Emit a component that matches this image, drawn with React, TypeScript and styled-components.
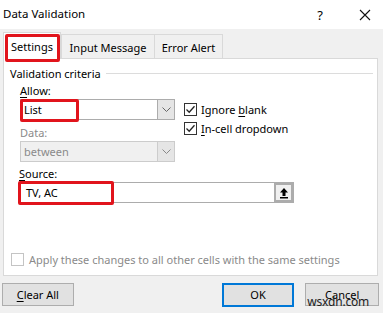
import React from "react";
import styled, { createGlobalStyle } from "styled-components";

const Global = createGlobalStyle`
  html, body { margin: 0; padding: 0; background: #f0f0f0; }
  body { font-family: "Noto Sans", "Open Sans", sans-serif; font-size: 11px; color: #000; }
`;

const Window = styled.div`
  width: 383px;
  height: 313px;
  background: #f0f0f0;
  display: flex;
  flex-direction: column;
  position: relative;
  overflow: hidden;
`;

const TitleBar = styled.div`
  height: 29px;
  background: #fff;
  display: flex;
  align-items: center;
  padding: 0 0 0 3px;
  font-size: 11.5px;
`;

const Title = styled.div`
  flex: 1;
  margin-top: -2px;
`;

const TitleBtn = styled.div<{ $w: number }>`
  width: ${(p) => p.$w}px;
  display: flex;
  justify-content: center;
  font-size: 13px;
`;

const TabStrip = styled.div`
  height: 29px;
  display: flex;
  align-items: flex-end;
  padding-left: 3px;
`;

const Tab = styled.div<{ $active?: boolean; $w: number }>`
  position: relative;
  width: ${(p) => p.$w}px;
  height: ${(p) => (p.$active ? 27 : 24)}px;
  box-sizing: border-box;
  display: flex;
  align-items: center;
  justify-content: center;
  background: ${(p) => (p.$active ? "#fff" : "#f0f0f0")};
  border: 1px solid #d9d9d9;
  border-bottom: none;
  margin-right: ${(p) => (p.$active ? 0 : -1)}px;
  padding-top: ${(p) => (p.$active ? 0 : 1)}px;
  z-index: ${(p) => (p.$active ? 2 : 1)};
  margin-bottom: ${(p) => (p.$active ? -1 : 0)}px;
`;

const Mark = styled.div<{ $l: number; $t: number; $w: number; $h: number }>`
  position: absolute;
  left: ${(p) => p.$l}px;
  top: ${(p) => p.$t}px;
  width: ${(p) => p.$w}px;
  height: ${(p) => p.$h}px;
  border: 3px solid #e1141c;
  border-radius: 2px;
  box-sizing: border-box;
  pointer-events: none;
`;

const Panel = styled.div`
  margin: 0 5px 0 3px;
  height: 218px;
  box-sizing: border-box;
  background: #fff;
  border: 1px solid #d9d9d9;
  padding: 7px 0 0 6px;
  display: flex;
  flex-direction: column;
`;

const GroupHead = styled.div`
  display: flex;
  align-items: center;
  gap: 5px;
  padding-right: 4px;
  &::after {
    content: "";
    flex: 1;
    height: 1px;
    background: #dcdcdc;
  }
`;

const Criteria = styled.div`
  display: grid;
  grid-template-columns: 155px auto;
  column-gap: 9px;
  margin-left: 10px;
  margin-top: 1px;
`;

const Left = styled.div`
  display: flex;
  flex-direction: column;
`;

const Label = styled.div<{ $disabled?: boolean; $mt?: number }>`
  height: 17px;
  line-height: 17px;
  margin-top: ${(p) => p.$mt ?? 0}px;
  color: ${(p) => (p.$disabled ? "#8a8a8a" : "#000")};
  u { text-decoration: underline; text-underline-offset: 2px; }
`;

const Combo = styled.div<{ $disabled?: boolean }>`
  position: relative;
  width: 155px;
  height: 21px;
  box-sizing: border-box;
  border: 1px solid ${(p) => (p.$disabled ? "#cccccc" : "#acacac")};
  background: ${(p) => (p.$disabled ? "#f0f0f0" : "#fff")};
  color: ${(p) => (p.$disabled ? "#8a8a8a" : "#000")};
  display: flex;
  align-items: center;
`;

const ComboText = styled.div`
  flex: 1;
  padding-left: 3px;
`;

const Arrow = styled.div<{ $disabled?: boolean }>`
  width: 17px;
  height: 100%;
  box-sizing: border-box;
  border-left: 1px solid ${(p) => (p.$disabled ? "#cccccc" : "#acacac")};
  background: #e5e5e5;
  display: flex;
  align-items: center;
  justify-content: center;
`;

const Checks = styled.div`
  display: flex;
  flex-direction: column;
  gap: 6px;
  margin-top: 21px;
`;

const CheckRow = styled.div<{ $disabled?: boolean }>`
  display: flex;
  align-items: center;
  gap: 4px;
  height: 13px;
  color: ${(p) => (p.$disabled ? "#8a8a8a" : "#000")};
  u { text-decoration: underline; text-underline-offset: 2px; }
`;

const Box = styled.div<{ $disabled?: boolean }>`
  width: 13px;
  height: 13px;
  box-sizing: border-box;
  border: 1px solid ${(p) => (p.$disabled ? "#c4c4c4" : "#333")};
  background: #fff;
  display: flex;
  align-items: center;
  justify-content: center;
`;

const SourceWrap = styled.div`
  margin-left: 9px;
  display: flex;
  flex-direction: column;
`;

const SourceInput = styled.div`
  position: relative;
  width: 275px;
  height: 21px;
  box-sizing: border-box;
  border: 1px solid #acacac;
  display: flex;
  align-items: center;
  padding-left: 6px;
`;

const SourceText = styled.div`
  flex: 1;
`;

const Collapse = styled.div`
  width: 19px;
  height: 19px;
  box-sizing: border-box;
  border: 2px solid #acacac;
  background: #f0f0f0;
  display: flex;
  align-items: center;
  justify-content: center;
`;

const ApplyRow = styled(CheckRow)`
  margin-top: auto;
  margin-bottom: 9px;
  margin-left: 1px;
  gap: 5px;
`;

const Footer = styled.div`
  flex: 1;
  display: flex;
  align-items: center;
  padding: 0 4px 0 2px;
`;

const Button = styled.div<{ $default?: boolean; $w: number; $ml?: number }>`
  width: ${(p) => p.$w}px;
  height: ${(p) => (p.$default ? 24 : 23)}px;
  margin-left: ${(p) => p.$ml ?? 0}px;
  box-sizing: border-box;
  border: ${(p) => (p.$default ? "2px solid #0078d7" : "1px solid #adadad")};
  background: #e1e1e1;
  display: flex;
  align-items: center;
  justify-content: center;
  position: relative;
  u { text-decoration: underline; text-underline-offset: 2px; }
`;

const Watermark = styled.div`
  position: absolute;
  left: 1px;
  top: 9px;
  font-size: 12px;
  color: #222;
  letter-spacing: -0.2px;
`;

const Chevron = ({ color = "#666" }: { color?: string }) => (
  <svg width="9" height="6" viewBox="0 0 9 6">
    <path d="M0.5 0.5 L4.5 4.5 L8.5 0.5" fill="none" stroke={color} strokeWidth="1" />
  </svg>
);

const Tick = () => (
  <svg width="11" height="11" viewBox="0 0 11 11">
    <path d="M1.5 5.5 L4.2 8.2 L9.5 2.2" fill="none" stroke="#222" strokeWidth="1.3" />
  </svg>
);

const UpIcon = () => (
  <svg width="10" height="12" viewBox="0 0 10 12">
    <path d="M5 1 L1 5.5 H3.5 V9 H6.5 V5.5 H9 Z" fill="#000" />
    <rect x="1" y="10" width="8" height="1.5" fill="#000" />
  </svg>
);

export default function App() {
  return (
    <>
      <Global />
      <Window>
        <TitleBar>
          <Title>Data Validation</Title>
          <TitleBtn $w={54}>?</TitleBtn>
          <TitleBtn $w={36}>
            <svg width="12" height="12" viewBox="0 0 12 12">
              <path d="M1 1 L11 11 M11 1 L1 11" stroke="#111" strokeWidth="1.1" />
            </svg>
          </TitleBtn>
        </TitleBar>
        <TabStrip>
          <Tab $active $w={58}>
            Settings
            <Mark $l={1} $t={1} $w={55} $h={28} />
          </Tab>
          <Tab $w={94}>Input Message</Tab>
          <Tab $w={69}>Error Alert</Tab>
        </TabStrip>
        <Panel>
          <GroupHead>Validation criteria</GroupHead>
          <Criteria>
            <Left>
              <Label>
                <u>A</u>llow:
              </Label>
              <Combo>
                <ComboText>List</ComboText>
                <Arrow>
                  <Chevron />
                </Arrow>
                <Mark $l={-1} $t={-1} $w={59} $h={23} />
              </Combo>
              <Label $disabled $mt={4}>
                Data:
              </Label>
              <Combo $disabled>
                <ComboText>between</ComboText>
                <Arrow $disabled>
                  <Chevron color="#888" />
                </Arrow>
              </Combo>
            </Left>
            <Checks>
              <CheckRow>
                <Box>
                  <Tick />
                </Box>
                <span>
                  Ignore <u>b</u>lank
                </span>
              </CheckRow>
              <CheckRow>
                <Box>
                  <Tick />
                </Box>
                <span>
                  <u>I</u>n-cell dropdown
                </span>
              </CheckRow>
            </Checks>
          </Criteria>
          <SourceWrap>
            <Label $mt={3}>
              <u>S</u>ource:
            </Label>
            <SourceInput>
              <SourceText>TV, AC</SourceText>
              <Collapse>
                <UpIcon />
              </Collapse>
              <Mark $l={-2} $t={-2} $w={96} $h={24} />
            </SourceInput>
          </SourceWrap>
          <ApplyRow $disabled>
            <Box $disabled />
            <span>Apply these changes to all other cells with the same settings</span>
          </ApplyRow>
        </Panel>
        <Footer>
          <Button $w={72}>
            <span>
              <u>C</u>lear All
            </span>
          </Button>
          <Button $default $w={73} $ml={148}>
            OK
          </Button>
          <Button $w={74} $ml={11}>
            Cancel
            <Watermark>wsxdn.com</Watermark>
          </Button>
        </Footer>
      </Window>
    </>
  );
}
